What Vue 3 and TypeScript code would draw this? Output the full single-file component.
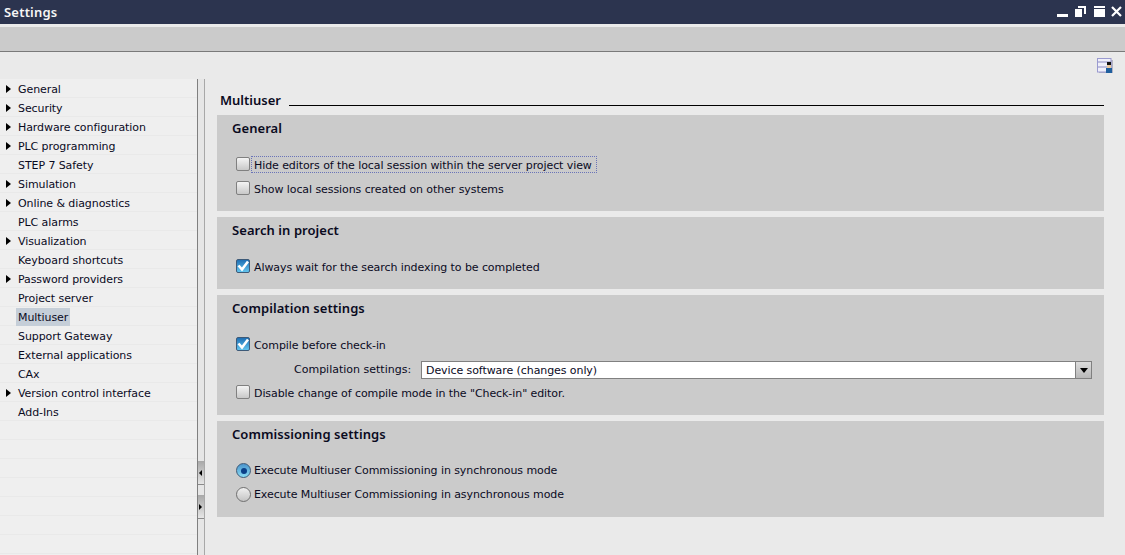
<script setup lang="ts">
const nav = [
  { t: 'General', a: true }, { t: 'Security', a: true }, { t: 'Hardware configuration', a: true },
  { t: 'PLC programming', a: true }, { t: 'STEP 7 Safety' }, { t: 'Simulation', a: true },
  { t: 'Online & diagnostics', a: true }, { t: 'PLC alarms' }, { t: 'Visualization', a: true },
  { t: 'Keyboard shortcuts' }, { t: 'Password providers', a: true }, { t: 'Project server' },
  { t: 'Multiuser', s: true }, { t: 'Support Gateway' }, { t: 'External applications' }, { t: 'CAx' },
  { t: 'Version control interface', a: true }, { t: 'Add-Ins' }, { t: '' }, { t: '' }, { t: '' }, { t: '' }, { t: '' }, { t: '' }, { t: '' },
] as { t: string; a?: boolean; s?: boolean }[]
</script>

<template>
  <div class="app">
    <header class="title">
      <span>Settings</span>
      <div class="winbtns">
        <svg width="68" height="16" viewBox="0 0 68 16" fill="#fff">
          <rect x="0" y="10" width="11" height="3" />
          <path d="M18 5h7v8h-7z M21 2h8v8h-2V4h-6z" />
          <path d="M37 2h11v2H37z M37 5h11v8H37z" />
          <path d="M55 3 L64 12 M64 3 L55 12" stroke="#fff" stroke-width="2.2" />
        </svg>
      </div>
    </header>
    <div class="toolbar"></div>
    <div class="topbar">
      <svg width="17" height="16" viewBox="0 0 17 16">
        <rect x="2" y="2" width="14" height="13" fill="#b4b4c4" />
        <rect x="0.5" y="0.5" width="13.5" height="13.5" fill="#f0f0fa" stroke="#9a9ad0" />
        <path d="M1 4h13M1 9h13" stroke="#8a8ac0" />
        <rect x="9" y="10" width="6" height="5" fill="#1f5f9e" />
        <rect x="10" y="4" width="4" height="3" fill="#111" />
        <rect x="10" y="7" width="4" height="3" fill="#e8c8a0" />
      </svg>
    </div>
    <div class="body">
      <nav class="side">
        <div v-for="(n, i) in nav" :key="i" class="row">
          <i v-if="n.a" class="arrow"></i>
          <span :class="{ sel: n.s }">{{ n.t }}</span>
        </div>
      </nav>
      <div class="gutter">
        <div class="grip"><i class="gl"></i></div>
        <div class="grip"><i class="gr"></i></div>
      </div>
      <main class="main">
        <div class="heading"><b>Multiuser</b><i></i></div>

        <section class="sec s1">
          <h3>General</h3>
          <label class="opt first"><i class="cb"></i><span class="focus">Hide editors of the local session within the server project view</span></label>
          <label class="opt"><i class="cb"></i><span>Show local sessions created on other systems</span></label>
        </section>

        <section class="sec s2">
          <h3>Search in project</h3>
          <label class="opt first"><i class="cb on"><svg width="12" height="12" viewBox="0 0 12 12"><path d="M1.5 5.5 L5 9.5 L11 1.5" fill="none" stroke="#fff" stroke-width="2.6" /></svg></i><span>Always wait for the search indexing to be completed</span></label>
        </section>

        <section class="sec s3">
          <h3>Compilation settings</h3>
          <label class="opt first"><i class="cb on"><svg width="12" height="12" viewBox="0 0 12 12"><path d="M1.5 5.5 L5 9.5 L11 1.5" fill="none" stroke="#fff" stroke-width="2.6" /></svg></i><span>Compile before check-in</span></label>
          <div class="selrow">
            <span class="sellabel">Compilation settings:</span>
            <div class="select"><span>Device software (changes only)</span><i class="drop"><b></b></i></div>
          </div>
          <label class="opt"><i class="cb"></i><span>Disable change of compile mode in the "Check-in" editor.</span></label>
        </section>

        <section class="sec s4">
          <h3>Commissioning settings</h3>
          <label class="opt first"><i class="rb on"><b></b></i><span>Execute Multiuser Commissioning in synchronous mode</span></label>
          <label class="opt"><i class="rb"></i><span>Execute Multiuser Commissioning in asynchronous mode</span></label>
        </section>
      </main>
    </div>
  </div>
</template>

<style scoped>
.app {
  width: 1125px;
  height: 555px;
  overflow: hidden;
  display: flex;
  flex-direction: column;
  background: #eaeaea;
  font-family: "DejaVu Sans", Verdana, sans-serif;
  font-size: 11px;
  letter-spacing: -0.08px;
  color: #0a0a1e;
}
.title {
  height: 24px;
  background: #2c344f;
  color: #f6f6f6;
  display: flex;
  align-items: center;
  justify-content: space-between;
  padding-left: 4px;
  font-family: "Noto Sans", sans-serif;
  font-size: 13px;
  font-weight: 600;
  letter-spacing: 0.2px;
  flex: none;
}
.winbtns { align-self: flex-start; padding-top: 4px; }
.winbtns svg { display: block; }
.toolbar {
  margin-top: 3px;
  height: 24px;
  background: #cbcbcb;
  border-bottom: 1px solid #7a7a7a;
  flex: none;
}
.topbar {
  height: 27px;
  display: flex;
  justify-content: flex-end;
  align-items: flex-start;
  padding: 6px 11px 0 0;
  box-sizing: border-box;
  flex: none;
}
.body { flex: 1; display: flex; min-height: 0; }
.side { width: 197px; background: #efefef; flex: none; }
.row {
  height: 19px;
  box-sizing: border-box;
  border-bottom: 1px solid #e9e9e9;
  padding: 1px 0 0 18px;
  line-height: 19px;
  position: relative;
  white-space: nowrap;
}
.row span.sel { background: #c5ced8; display: inline-block; height: 18px; margin-left: -2px; padding: 0 2px; }
.arrow {
  position: absolute;
  left: 6px;
  top: 6px;
  border-left: 5px solid #000;
  border-top: 4.5px solid transparent;
  border-bottom: 4.5px solid transparent;
}
.gutter {
  width: 8px;
  flex: none;
  box-sizing: border-box;
  border-left: 1px solid #808080;
  border-right: 1px solid #a8a8a8;
  background: #e6e6e6;
  padding-top: 382px;
  display: flex;
  flex-direction: column;
  gap: 10px;
}
.grip {
  height: 24px;
  background: linear-gradient(#a8a8a8, #e6e6e6);
  border-bottom: 1px solid #8a8a8a;
  box-sizing: border-box;
  display: flex;
  align-items: center;
  justify-content: flex-start;
}
.gl { border-right: 3px solid #000; border-top: 3px solid transparent; border-bottom: 3px solid transparent; margin-left: 1px; }
.gr { border-left: 3px solid #000; border-top: 3px solid transparent; border-bottom: 3px solid transparent; margin-left: 1px; }
.main { flex: 1; padding: 0 21px 0 12px; min-width: 0; }
.heading {
  height: 27px;
  display: flex;
  align-items: flex-end;
  padding-left: 3px;
  gap: 8px;
  margin-bottom: 9px;
}
.heading b {
  font-family: "Noto Sans", sans-serif;
  font-weight: 600;
  font-size: 13px;
  letter-spacing: 0;
  line-height: 15px;
  margin-bottom: -2px;
}
.heading i { flex: 1; height: 1px; background: #000; }
.sec {
  background: #cbcbcb;
  margin-bottom: 6px;
  padding: 0 12px 0 19px;
  box-sizing: border-box;
  display: flex;
  flex-direction: column;
}
.s1 { height: 96px; }
.s2 { height: 72px; }
.s3 { height: 120px; }
.s4 { height: 96px; }
h3 {
  margin: 0 0 0 -4px;
  font-family: "Noto Sans", sans-serif;
  font-size: 13px;
  font-weight: 600;
  letter-spacing: 0.06px;
  height: 27px;
  line-height: 27px;
}
.opt {
  height: 24px;
  display: flex;
  align-items: center;
  gap: 4px;
  white-space: nowrap;
}
.opt.first { margin-top: 10px; }
.cb + span { padding-top: 2px; line-height: 13px; }
.cb + .focus {
  outline: 1px dotted #6a74b8;
  outline-offset: 0;
  margin-left: -2px;
  padding: 2px 4px 0 2px;
}
.cb {
  width: 14px;
  height: 14px;
  box-sizing: border-box;
  border: 1px solid #808080;
  border-radius: 2px;
  background: linear-gradient(#f4f4f4, #c8c8c8);
  flex: none;
  display: flex;
  align-items: center;
  justify-content: center;
}
.cb.on { background: linear-gradient(#1e6fb4, #62c4ee); border-color: #3d5a78; }
.cb svg { display: block; }
.rb {
  width: 15px;
  height: 15px;
  box-sizing: border-box;
  border: 1px solid #707070;
  border-radius: 50%;
  background: linear-gradient(#f0f0f0, #c4c4c4);
  flex: none;
  display: flex;
  align-items: center;
  justify-content: center;
  margin: 1px -1px 0 0;
}
.rb.on { background: linear-gradient(#4a94cc, #8adcf4); border-color: #3d5a78; }
.rb b { width: 6px; height: 6px; border-radius: 50%; background: #0a3f88; }
.selrow {
  height: 24px;
  box-sizing: border-box;
  padding-top: 5px;
  display: flex;
  align-items: flex-start;
  justify-content: space-between;
}
.sellabel { margin-left: 58px; line-height: 18px; letter-spacing: 0; }
.select {
  width: 671px;
  height: 18px;
  box-sizing: border-box;
  background: #fff;
  border: 1px solid #808080;
  display: flex;
  align-items: center;
  justify-content: space-between;
  padding-left: 4px;
}
.drop {
  width: 16px;
  height: 16px;
  border-left: 1px solid #808080;
  box-sizing: border-box;
  background: linear-gradient(#dcdcdc, #b8b8b8);
  display: flex;
  align-items: center;
  justify-content: center;
}
.drop b { border-top: 5px solid #000; border-left: 4px solid transparent; border-right: 4px solid transparent; }
</style>
